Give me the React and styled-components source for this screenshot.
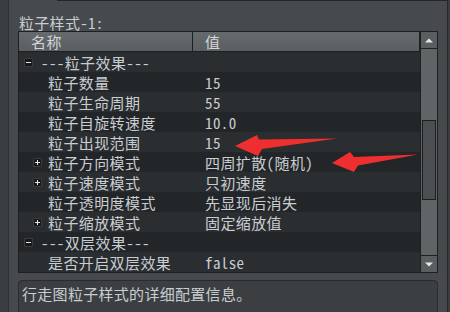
import React from "react";
import styled, { createGlobalStyle } from "styled-components";

const GlobalStyle = createGlobalStyle`
  body {
    margin: 0;
    background: #3a3d3f;
    overflow: hidden;
  }
`;

const Page = styled.div`
  position: relative;
  width: 450px;
  height: 312px;
  display: flex;
  font-family: "Noto Sans Mono CJK SC", "Noto Sans CJK SC", monospace;
  font-size: 15px;
  color: #c9cdd1;
`;

const Panel = styled.div`
  margin-left: 8px;
  width: 438px;
  border-left: 1px solid #2f3234;
  border-right: 1px solid #25272a;
  background: #464a4d;
  display: flex;
  flex-direction: column;
`;

const TopStrip = styled.div`
  height: 5px;
  padding-left: 48px;
  display: flex;
`;

const TopWidget = styled.div`
  flex: 1;
  display: flex;
  background: #3f4244;
  border-left: 1px solid #232527;
  border-bottom: 1px solid #232527;
`;

const TopTab = styled.div`
  width: 48px;
  background: #2b2d2f;
  border-right: 1px solid #1e2022;
`;

const Content = styled.div`
  padding: 14px 9px 0 9px;
  display: flex;
  flex-direction: column;
`;

const Label = styled.div`
  height: 16px;
  line-height: 16px;
  padding-left: 1px;
  letter-spacing: 0.3px;
`;

const TableWrap = styled.div`
  width: 418px;
  border: 1px solid #1d1f21;
  display: flex;
`;

const Grid = styled.div`
  flex: 1;
  display: flex;
  flex-direction: column;
`;

const Header = styled.div`
  height: 19px;
  display: flex;
  background: linear-gradient(#656a6d, #5a5f62);
  border-bottom: 1px solid #1d1f21;
  border-right: 1px solid #1d1f21;
  color: #d3d6d8;
`;

const HeadCell = styled.div`
  width: ${(p) => (p.$grow ? "auto" : "161px")};
  flex: ${(p) => (p.$grow ? 1 : "none")};
  padding-left: 12px;
  line-height: 19px;
  letter-spacing: 0.6px;
  border-right: ${(p) => (p.$grow ? "none" : "1px solid #1d1f21")};
`;

const Row = styled.div`
  height: 20px;
  display: flex;
  align-items: center;
  background: ${(p) => (p.$odd ? "#2b2e30" : "#232628")};
`;

const NameCell = styled.div`
  width: ${(p) => (p.$child ? 160 : 169)}px;
  height: 20px;
  padding-left: ${(p) => (p.$child ? 14 : 5)}px;
  display: flex;
  align-items: center;
  gap: ${(p) => (p.$child ? 6 : 8)}px;
  letter-spacing: 0.4px;
  white-space: nowrap;
`;

const NameText = styled.span`
  padding-top: 2px;
  line-height: 18px;
`;

const ValueCell = styled.div`
  flex: 1;
  height: 18px;
  padding: 2px 0 0 12px;
  line-height: 18px;
  letter-spacing: 0.4px;
  white-space: nowrap;
`;

const Expander = styled.span`
  position: relative;
  flex: none;
  width: 7px;
  height: 7px;
  border: 1px solid #3a3d40;
  border-radius: 1px;
  background: #17191a;
  visibility: ${(p) => (p.$kind ? "visible" : "hidden")};

  &::before {
    content: "";
    position: absolute;
    left: 1px;
    top: 3px;
    width: 5px;
    height: 1px;
    background: #e6e6e6;
  }

  &::after {
    content: "";
    display: ${(p) => (p.$kind === "plus" ? "block" : "none")};
    position: absolute;
    left: 3px;
    top: 1px;
    width: 1px;
    height: 5px;
    background: #e6e6e6;
  }
`;

const Scrollbar = styled.div`
  width: 16px;
  border-left: 1px solid #1d1f21;
  background: #5f6466;
  display: flex;
  flex-direction: column;
`;

const ScrollButton = styled.div`
  height: 16px;
  display: flex;
  align-items: center;
  justify-content: center;
  background: #595e61;
  border-top: ${(p) => (p.$down ? "1px solid #1d1f21" : "none")};
  border-bottom: ${(p) => (p.$down ? "none" : "1px solid #1d1f21")};
`;

const Track = styled.div`
  flex: 1;
  padding: 71px 0 0 1px;
`;

const Thumb = styled.div`
  width: 12px;
  height: 78px;
  background: #4b4f52;
  border: 1px solid #1c1e20;
`;

const InfoBox = styled.div`
  box-sizing: border-box;
  margin-top: 7px;
  width: 420px;
  height: 40px;
  border: 1px solid #2a2c2f;
  border-radius: 4px;
  background: #3c3f42;
  padding: 3px 0 0 3px;
  line-height: 20px;
  letter-spacing: 0.3px;
`;

const Overlay = styled.svg`
  position: absolute;
  left: 0;
  top: 0;
  pointer-events: none;
`;

const rows = [
  { name: "---粒子效果---", expand: "minus" },
  { name: "粒子数量", value: "15", child: true },
  { name: "粒子生命周期", value: "55", child: true },
  { name: "粒子自旋转速度", value: "10.0", child: true },
  { name: "粒子出现范围", value: "15", child: true },
  { name: "粒子方向模式", value: "四周扩散(随机)", child: true, expand: "plus" },
  { name: "粒子速度模式", value: "只初速度", child: true, expand: "plus" },
  { name: "粒子透明度模式", value: "先显现后消失", child: true },
  { name: "粒子缩放模式", value: "固定缩放值", child: true, expand: "plus" },
  { name: "---双层效果---", expand: "minus" },
  { name: "是否开启双层效果", value: "false", child: true },
];

const Arrow = ({ dir }) => (
  <svg width="8" height="5" viewBox="0 0 8 5">
    <path
      d={dir === "up" ? "M0 4.5 L4 0.5 L8 4.5 Z" : "M0 0.5 L8 0.5 L4 4.5 Z"}
      fill="#e8e8e8"
    />
  </svg>
);

export default function App() {
  return (
    <Page>
      <GlobalStyle />
      <Panel>
        <TopStrip>
          <TopWidget>
            <TopTab />
          </TopWidget>
        </TopStrip>
        <Content>
          <Label>粒子样式-1:</Label>
          <TableWrap>
            <Grid>
              <Header>
                <HeadCell>名称</HeadCell>
                <HeadCell $grow>值</HeadCell>
              </Header>
              {rows.map((r, i) => (
                <Row key={i} $odd={i % 2 === 0}>
                  <NameCell $child={r.child}>
                    <Expander $kind={r.expand} />
                    <NameText>{r.name}</NameText>
                  </NameCell>
                  <ValueCell>{r.value}</ValueCell>
                </Row>
              ))}
            </Grid>
            <Scrollbar>
              <ScrollButton>
                <Arrow dir="up" />
              </ScrollButton>
              <Track>
                <Thumb />
              </Track>
              <ScrollButton $down>
                <Arrow dir="down" />
              </ScrollButton>
            </Scrollbar>
          </TableWrap>
          <InfoBox>行走图粒子样式的详细配置信息。</InfoBox>
        </Content>
      </Panel>
      <Overlay width="450" height="312" viewBox="0 0 450 312">
        <polygon
          points="235,146 257,135 259,139.5 337,138.5 262,149 258,156"
          fill="#ef2f2f"
        />
        <polygon
          points="332,163 350,152 354,157 418,154.5 358,165.5 354,172"
          fill="#ef2f2f"
        />
      </Overlay>
    </Page>
  );
}
